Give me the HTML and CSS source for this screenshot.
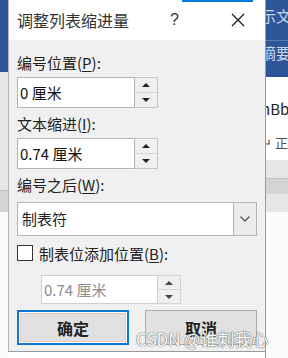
FILE: index.html
```html
<!DOCTYPE html>
<html lang="zh-CN">
<head>
  <meta charset="UTF-8" />
  <title>调整列表缩进量</title>
  <link rel="stylesheet" href="styles.css">
</head>
<body>

<div class="screen">
  <div class="side-left">
    <div class="ribbon"></div>
    <div class="pane-gray"><div class="band"></div></div>
    <div class="pane-white"></div>
  </div>

  <div class="dialog">
    <div class="titlebar">
      <span class="title">调整列表缩进量</span>
      <span class="help">?</span>
      <svg class="close" width="14" height="14" viewBox="0 0 14 14">
        <path d="M1 1 L13 13 M13 1 L1 13" stroke="#222" stroke-width="1.4" fill="none"/>
      </svg>
      <div class="focus-bar"></div>
    </div>

    <div class="body">
      <div class="label">编号位置(<u>P</u>):</div>
      <div class="spin-field">
        <div class="input">0 厘米</div>
        <div class="spinner">
          <div class="spin-up"><span class="tri-up"></span></div>
          <div class="spin-down"><span class="tri-down"></span></div>
        </div>
      </div>

      <div class="label">文本缩进(<u>I</u>):</div>
      <div class="spin-field">
        <div class="input">0.74 厘米</div>
        <div class="spinner">
          <div class="spin-up"><span class="tri-up"></span></div>
          <div class="spin-down"><span class="tri-down"></span></div>
        </div>
      </div>

      <div class="label">编号之后(<u>W</u>):</div>
      <div class="select">
        <div class="select-value">制表符</div>
        <div class="select-btn">
          <svg width="12" height="8" viewBox="0 0 12 8">
            <path d="M1.5 1.5 L6 6 L10.5 1.5" stroke="#555" stroke-width="1.3" fill="none"/>
          </svg>
        </div>
      </div>

      <div class="check-row">
        <span class="checkbox"></span>
        <span class="check-label">制表位添加位置(<u>B</u>):</span>
      </div>
      <div class="spin-field disabled">
        <div class="input">0.74 厘米</div>
        <div class="spinner">
          <div class="spin-up"><span class="tri-up"></span></div>
          <div class="spin-down"><span class="tri-down"></span></div>
        </div>
      </div>

      <div class="buttons">
        <button class="btn btn-ok">确定</button>
        <button class="btn">取消</button>
      </div>
    </div>
  </div>

  <div class="side-right">
    <div class="ribbon">
      <div class="ribbon-text first">示文</div>
      <div class="ribbon-text">摘要</div>
    </div>
    <div class="styles">
      <div class="style-text">nBb</div>
      <div class="style-text small">↵ 正</div>
    </div>
    <div class="pane-gray"><div class="band"></div></div>
    <div class="pane-white"></div>
  </div>

  <div class="watermark">CSDN @谁刺我心</div>
</div>

</body>
</html>
```

FILE: styles.css
```css
* {
  box-sizing: border-box;
}

body {
  margin: 0;
  font-family: "Noto Sans CJK SC", "Noto Sans", sans-serif;
  color: #1a1a1a;
  background: #fff;
}

.screen {
  position: relative;
  display: flex;
  width: 288px;
  height: 358px;
  overflow: hidden;
}

/* background window around the dialog */
.side-left {
  width: 8px;
  display: flex;
  flex-direction: column;
}

.side-right {
  flex: 1;
  display: flex;
  flex-direction: column;
  overflow: hidden;
  border-left: 1px solid #9a9a9a;
}

.ribbon {
  height: 72px;
  background: #2e5597;
  flex-shrink: 0;
}

.side-right .ribbon {
  height: 77px;
  padding-top: 6px;
}

.ribbon-text {
  color: #c9d7ee;
  font-size: 15px;
  line-height: 20px;
  white-space: nowrap;
  margin-left: -5px;
}

.ribbon-text.first {
  padding-bottom: 14px;
  border-bottom: 1px solid #5a7cb6;
  margin-bottom: 2px;
}

.styles {
  height: 83px;
  background: #fff;
  padding-top: 22px;
  flex-shrink: 0;
}

.style-text {
  font-size: 15px;
  line-height: 20px;
  white-space: nowrap;
  margin-left: -5px;
  color: #222;
}

.style-text.small {
  font-size: 13px;
  margin-top: 14px;
  color: #555;
}

.pane-gray {
  height: 140px;
  background: #e6e6e6;
  display: flex;
  flex-direction: column;
  justify-content: flex-end;
  flex-shrink: 0;
}

.side-right .pane-gray {
  height: 52px;
  justify-content: center;
}

.band {
  height: 22px;
  background: #d4d4d4;
  border-top: 1px solid #c0c0c0;
}

.side-right .band {
  height: 16px;
}

.pane-white {
  flex: 1;
  background: #fafafa;
}

/* dialog */
.dialog {
  width: 257px;
  display: flex;
  flex-direction: column;
  background: #f0f0f0;
  border-left: 1px solid #b8b8b8;
  border-bottom: 1px solid #9a9a9a;
  height: 352px;
}

.titlebar {
  position: relative;
  height: 40px;
  background: #fff;
  display: flex;
  align-items: center;
  padding-left: 8px;
}

.title {
  font-size: 16px;
  color: #333;
  width: 153px;
}

.help {
  font-family: "Liberation Sans", sans-serif;
  font-size: 16px;
  color: #333;
  width: 61px;
}

.focus-bar {
  position: absolute;
  top: 0;
  left: 173px;
  width: 71px;
  height: 2px;
  background: #0078d7;
}

.body {
  padding: 0 8px 0 8px;
  display: flex;
  flex-direction: column;
}

.label {
  font-size: 15px;
  line-height: 22px;
  margin-top: 12px;
  margin-bottom: 3px;
  color: #222;
}

.body .label ~ .label {
  margin-top: 5px;
}

u {
  text-decoration-thickness: 1px;
  text-underline-offset: 2px;
}

.spin-field {
  display: flex;
  width: 141px;
  height: 31px;
}

.input {
  width: 118px;
  background: #fff;
  border: 1px solid #b4b4b4;
  font-size: 15px;
  line-height: 29px;
  padding-left: 2px;
  color: #111;
}

.spinner {
  width: 23px;
  display: flex;
  flex-direction: column;
  border: 1px solid #c4c4c4;
  border-left: none;
  background: #f0f0f0;
}

.spin-up, .spin-down {
  flex: 1;
  display: flex;
  align-items: center;
  justify-content: center;
}

.spin-up {
  border-bottom: 1px solid #d4d4d4;
}

.tri-up {
  width: 0;
  height: 0;
  border-left: 4px solid transparent;
  border-right: 4px solid transparent;
  border-bottom: 4px solid #222;
}

.tri-down {
  width: 0;
  height: 0;
  border-left: 4px solid transparent;
  border-right: 4px solid transparent;
  border-top: 4px solid #222;
}

.select {
  display: flex;
  width: 240px;
  height: 34px;
  margin-top: 3px;
  border: 1px solid #b4b4b4;
  background: #fff;
}

.select-value {
  flex: 1;
  font-size: 15px;
  line-height: 32px;
  padding-left: 4px;
  color: #222;
}

.select-btn {
  width: 23px;
  display: flex;
  align-items: center;
  justify-content: center;
  background: #ececec;
  border-left: 1px solid #b4b4b4;
}

.check-row {
  display: flex;
  align-items: center;
  margin-top: 9px;
  height: 16px;
}

.checkbox {
  width: 16px;
  height: 16px;
  border: 1px solid #333;
  background: #fff;
  margin-right: 6px;
}

.check-label {
  font-size: 15px;
  color: #222;
}

.spin-field.disabled {
  margin-top: 14px;
  margin-left: 24px;
  width: 140px;
  height: 29px;
}

.spin-field.disabled .input {
  color: #8c8c8c;
  border-color: #cfcfcf;
  line-height: 27px;
  width: 118px;
}

.spin-field.disabled .spinner {
  border-color: #d4d4d4;
}

.spin-field.disabled .tri-up {
  border-bottom-color: #444;
}

.spin-field.disabled .tri-down {
  border-top-color: #444;
}

.buttons {
  display: flex;
  justify-content: space-between;
  width: 240px;
  margin-top: 6px;
}

.btn {
  width: 112px;
  height: 35px;
  font-family: "Noto Sans CJK SC", sans-serif;
  font-size: 16px;
  font-weight: bold;
  color: #222;
  background: #e1e1e1;
  border: 1px solid #adadad;
  padding: 0;
}

.btn-ok {
  border: 2px solid #0a78d7;
  box-shadow: inset 0 0 0 1px #fff, inset 0 0 0 2px #e8c8b8;
}

.watermark {
  position: absolute;
  left: 136px;
  top: 326px;
  font-family: "Noto Sans CJK SC", sans-serif;
  font-size: 17px;
  color: #fff;
  white-space: nowrap;
  text-shadow: 0 0 1px #666, 0 0 1px #666, 0 0 1px #888;
}
```
